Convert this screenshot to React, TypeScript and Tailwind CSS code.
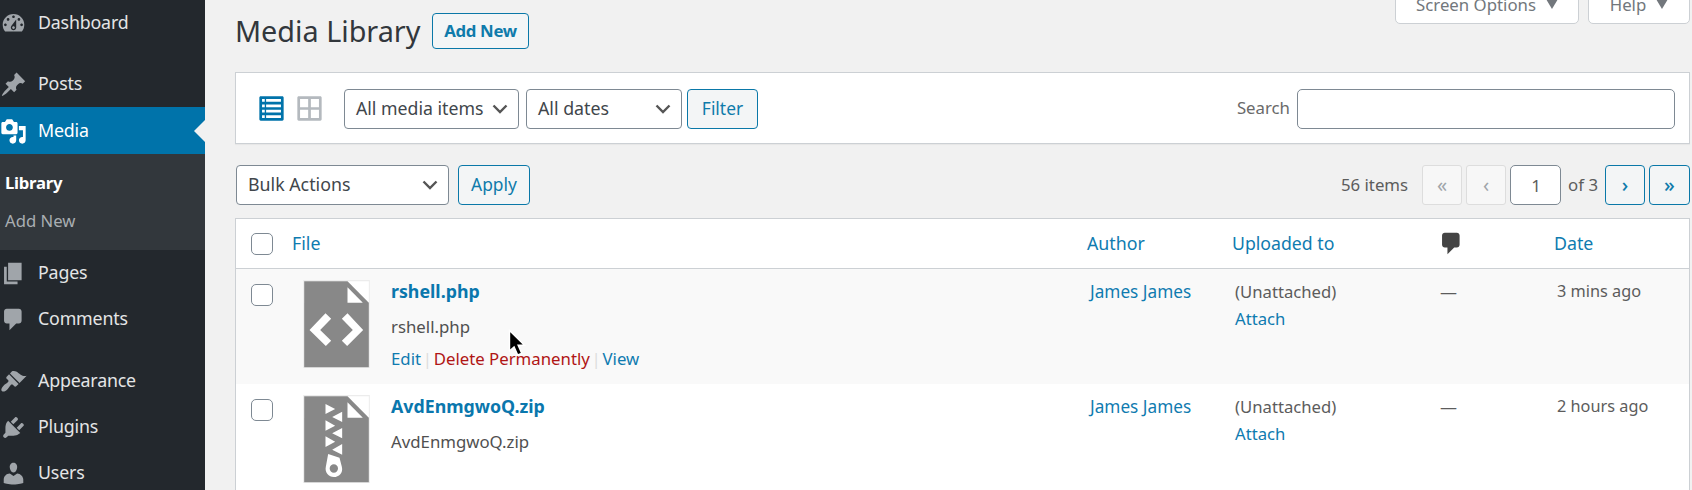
import type { ReactNode } from 'react';

const icons = {
  dashboard:
    'M3.76 16h12.48c1.1-1.37 1.76-3.11 1.76-5 0-4.42-3.58-8-8-8s-8 3.58-8 8c0 1.89.66 3.63 1.76 5zM10 4c.55 0 1 .45 1 1s-.45 1-1 1-1-.45-1-1 .45-1 1-1zM6 6c.55 0 1 .45 1 1s-.45 1-1 1-1-.45-1-1 .45-1 1-1zm8 0c.55 0 1 .45 1 1s-.45 1-1 1-1-.45-1-1 .45-1 1-1zm-5.37 5.55L12 7v6c0 1.1-.9 2-2 2s-2-.9-2-2c0-.57.24-1.08.63-1.45zM4 10c.55 0 1 .45 1 1s-.45 1-1 1-1-.45-1-1 .45-1 1-1zm12 0c.55 0 1 .45 1 1s-.45 1-1 1-1-.45-1-1 .45-1 1-1zm-5 3c0-.55-.45-1-1-1s-1 .45-1 1 .45 1 1 1 1-.45 1-1z',
  post: 'M10.44 3.02l1.82-1.82 6.36 6.35-1.83 1.82c-1.05-.68-2.48-.57-3.41.36l-.75.75c-.92.93-1.04 2.35-.35 3.41l-1.83 1.82-2.41-2.41-2.8 2.79c-.42.42-3.38 2.71-3.8 2.29s1.86-3.39 2.28-3.81l2.79-2.79L4.1 9.36l1.83-1.82c1.05.69 2.48.57 3.4-.36l.75-.75c.93-.92 1.05-2.35.36-3.41z',
  media:
    'M13 11V4c0-.55-.45-1-1-1h-1.67L9 1H5L3.67 3H2c-.55 0-1 .45-1 1v7c0 .55.45 1 1 1h10c.55 0 1-.45 1-1zM7 4.5c1.38 0 2.5 1.12 2.5 2.5S8.38 9.5 7 9.5 4.5 8.38 4.5 7 5.62 4.5 7 4.5zM14 6h5v10.5c0 1.38-1.12 2.5-2.5 2.5S14 17.88 14 16.5s1.12-2.5 2.5-2.5c.17 0 .34.02.5.05V9h-3V6zm-4 8.05V13h2v3.5c0 1.38-1.12 2.5-2.5 2.5S7 17.88 7 16.5 8.12 14 9.5 14c.17 0 .34.02.5.05z',
  page: 'M6 15V2h10v13H6zm-1 1h8v2H3V5h2v11z',
  comments: 'M5 2h9c1.1 0 2 .9 2 2v7c0 1.1-.9 2-2 2h-2l-5 5v-5H5c-1.1 0-2-.9-2-2V4c0-1.1.9-2 2-2z',
  appearance:
    'M14.48 11.06L7.41 3.99l1.5-1.5c.5-.56 2.3-.47 3.51.32 1.21.8 1.43 1.28 2.91 2.1 1.18.64 2.45 1.26 4.45.85zm-.71.71L6.7 4.7 4.93 6.47c-.39.39-.39 1.02 0 1.41l1.06 1.06c.39.39.39 1.03 0 1.42-.6.6-1.43 1.11-2.21 1.69-.35.26-.7.53-1.01.84C1.43 14.23.4 16.08 1.4 17.07c.99 1 2.84-.03 4.18-1.36.31-.31.58-.66.85-1.02.57-.78 1.08-1.61 1.69-2.21.39-.39 1.02-.39 1.41 0l1.06 1.06c.39.39 1.02.39 1.41 0z',
  plugins:
    'M13.11 4.36L9.87 7.6 8 5.73l3.24-3.24c.35-.34 1.05-.2 1.56.32.52.51.66 1.21.31 1.55zm-8 1.77l.91-1.12 9.01 9.01-1.19.84c-.71.71-2.63 1.16-3.82 1.16H6.14L4.9 17.26c-.59.59-1.54.59-2.12 0-.59-.58-.59-1.53 0-2.12l1.24-1.24v-3.88c0-1.13.4-3.19 1.09-3.89zm7.26 3.97l3.24-3.24c.34-.35 1.04-.21 1.55.31.52.51.66 1.21.31 1.55l-3.24 3.25z',
  users:
    'M10 9.25c-2.27 0-2.73-3.44-2.73-3.44C7 4.02 7.82 2 9.97 2c2.16 0 2.98 2.02 2.71 3.81 0 0-.41 3.44-2.68 3.44zm0 2.57L12.72 10c2.39 0 4.52 2.33 4.52 4.53v2.49s-3.65 1.13-7.24 1.13c-3.65 0-7.24-1.13-7.24-1.13v-2.49c0-2.25 1.94-4.48 4.47-4.48z',
  grid: 'M2 1h16c.55 0 1 .45 1 1v16c0 .55-.45 1-1 1H2c-.55 0-1-.45-1-1V2c0-.55.45-1 1-1zm7.01 7.99v-6H3v6h6.01zm8 0v-6h-6v6h6zm-8 8.01v-6H3v6h6.01zm8 0v-6h-6v6h6z',
  list: 'M2 1h16c.55 0 1 .45 1 1v16c0 .55-.45 1-1 1H2c-.55 0-1-.45-1-1V2c0-.55.45-1 1-1zM3 3v2h2V3H3zm3 0v2h11V3H6zM3 7v2h2V7H3zm3 0v2h11V7H6zm-3 4v2h2v-2H3zm3 0v2h11v-2H6zm-3 4v2h2v-2H3zm3 0v2h11v-2H6z',
};

type IconName = keyof typeof icons;

function Icon({ name, className = '' }: { name: IconName; className?: string }) {
  return (
    <svg viewBox="0 0 20 20" fill="currentColor" fillRule="evenodd" className={`size-[27px] shrink-0 ${className}`}>
      <path d={icons[name]} />
    </svg>
  );
}

function NavItem({ icon, label, active }: { icon: IconName; label: string; active?: boolean }) {
  return (
    <a
      className={`relative flex shrink-0 items-center gap-[11px] text-[17.8px] tracking-[-0.01em] ${
        active ? 'h-[47px] bg-[#0073aa] pt-px text-white' : 'h-[46px] text-[#e4e5e6]'
      }`}
    >
      <Icon name={icon} className={active ? 'text-white' : 'text-[#a0a5aa]'} />
      <span>{label}</span>
      {active && (
        <svg viewBox="0 0 11 22" className="absolute right-0 h-[22px] w-[11px]">
          <path d="M11 0v22L0 11z" fill="#f1f1f1" />
        </svg>
      )}
    </a>
  );
}

function Select({ label, className }: { label: string; className: string }) {
  return (
    <button
      className={`flex h-10 items-center justify-between rounded-[4px] border-[1.4px] border-[#7e8993] bg-white pl-[11px] pr-[10px] text-[#41464b] ${className}`}
    >
      {label}
      <svg viewBox="0 0 16 10" className="h-[10px] w-4" fill="none" stroke="#555" strokeWidth="2.4">
        <path d="M1.5 1.5 8 8l6.5-6.5" />
      </svg>
    </button>
  );
}

function Button({ children, className }: { children: ReactNode; className: string }) {
  return (
    <button
      className={`flex items-center justify-center rounded-[4px] border-[1.4px] border-[#0a78a8] bg-[#f3f5f6] text-[#0f7bab] ${className}`}
    >
      {children}
    </button>
  );
}

function Tab({ label, className }: { label: string; className: string }) {
  return (
    <button
      className={`flex h-[42px] items-center justify-center gap-[10px] rounded-b-[5px] border border-[#ccd0d4] bg-white pt-1 text-[16.8px] text-[#72777c] ${className}`}
    >
      {label}
      <svg viewBox="0 0 12 10" className="-mt-0.5 h-[10px] w-3">
        <path d="M0 0h12L6 10z" fill="#72777c" />
      </svg>
    </button>
  );
}

function Checkbox() {
  return <span className="block size-[22px] rounded-[5px] border-[1.3px] border-[#7e8993] bg-white" />;
}

function FileIcon({ kind, fold }: { kind: 'code' | 'zip'; fold: string }) {
  return (
    <svg viewBox="27 30 200 264" className="h-[88px] w-[67px]">
      <path d="M27 30h200v264H27z" fill="#ececec" />
      <path d="M30 34h194v258H30z" fill={fold} />
      <path d="M30 34h130l64 64v194H30z" fill="#888" />
      <path d="M160 52v46h46z" fill={fold} />
      {kind === 'code' ? (
        <path
          fill={fold}
          d="M46 180l48-50 17 16-33 34 33 32-16 16zM207 180l-47-50-17 16 33 34-33 32 16 16z"
        />
      ) : (
        <path
          fill={fold}
          fillRule="evenodd"
          d="M94 57v30l29-15zM144 80v31l-30-15zM94 106v31l29-15zM144 129v31l-30-15zM94 154v32l29-16zM144 177v32l-30-15zM102 207l34 11 7 27c5 18-9 31-24 31s-28-14-24-31zM119 238a12 12 0 1 0 0 25 12 12 0 0 0 0-25z"
        />
      )}
    </svg>
  );
}

const cols = 'grid grid-cols-[57px_794px_145px_207px_115px_1fr]';
const link = 'text-[#0f7bb0]';

function Row({
  file,
  date,
  kind,
  fold,
  className,
  children,
}: {
  file: string;
  date: string;
  kind: 'code' | 'zip';
  fold: string;
  className: string;
  children?: ReactNode;
}) {
  return (
    <div className={`${cols} shrink-0 text-[17px] leading-[27px] text-[#5c5c5c] ${className}`}>
      <div className="pl-[15px] pt-[15px]">
        <Checkbox />
      </div>
      <div className="flex gap-[21px] pl-[10px] pt-[11px]">
        <FileIcon kind={kind} fold={fold} />
        <div className="-mt-0.5">
          <div className="text-[17.8px] font-bold text-[#0a77ad]">{file}</div>
          <div className="mt-2 text-[16.8px] text-[#505050]">{file}</div>
          {children}
        </div>
      </div>
      <div className={`pl-[3px] pt-[9px] text-[17.2px] ${link}`}>James James</div>
      <div className="pl-[3px] pt-[9px] text-[16.7px]">
        <div>(Unattached)</div>
        <div className={link}>Attach</div>
      </div>
      <div className="pl-px pt-[9px]">—</div>
      <div className="pl-[3px] pt-[9px] text-[16.3px]">{date}</div>
    </div>
  );
}

export default function App() {
  return (
    <div className="flex h-[490px] w-[1692px] overflow-hidden whitespace-nowrap bg-[#f1f1f1] font-['Noto_Sans',sans-serif] text-[17.8px] leading-none">
      <nav className="flex w-[205px] shrink-0 flex-col bg-[#23282d]">
        <NavItem icon="dashboard" label="Dashboard" />
        <div className="h-[15px] shrink-0" />
        <NavItem icon="post" label="Posts" />
        <NavItem icon="media" label="Media" active />
        <div className="flex h-[96px] shrink-0 flex-col bg-[#32373c] pl-[5px] pt-[10px] text-[16.7px] leading-[37.5px]">
          <a className="font-bold tracking-[-0.015em] text-white">Library</a>
          <a className="text-[#a9aeb2]">Add New</a>
        </div>
        <NavItem icon="page" label="Pages" />
        <NavItem icon="comments" label="Comments" />
        <div className="h-4 shrink-0" />
        <NavItem icon="appearance" label="Appearance" />
        <NavItem icon="plugins" label="Plugins" />
        <NavItem icon="users" label="Users" />
      </nav>

      <main className="flex w-[1485px] flex-col pl-[30px]">
        <header className="flex h-[72px] shrink-0">
          <h1 className="mt-[9px] w-[197px] text-[28.8px] leading-[43px] text-[#32373c]">Media Library</h1>
          <Button className="mt-[13px] h-9 w-[97px] rounded-[3px] pt-px text-[16.8px] font-bold tracking-[-0.02em]">
            Add New
          </Button>
          <div className="-mt-[18px] ml-auto flex gap-[9px]">
            <Tab label="Screen Options" className="w-[184px]" />
            <Tab label="Help" className="w-[102px]" />
          </div>
        </header>

        <section className="flex h-[72px] shrink-0 items-center border border-[#ccd0d4] bg-white pl-[22px] pr-[14px] pt-px shadow-[0_1px_1px_rgba(0,0,0,0.04)]">
          <Icon name="list" className="text-[#0073aa]" />
          <Icon name="grid" className="ml-[11px] text-[#b4b9be]" />
          <Select label="All media items" className="ml-[21px] w-[175px] text-[17.7px]" />
          <Select label="All dates" className="ml-[7px] w-[156px]" />
          <Button className="ml-[5px] h-10 w-[71px] text-[17.4px]">Filter</Button>
          <label className="ml-auto mr-[7px] text-[16.8px] text-[#6a6a6a]">Search</label>
          <input className="h-10 w-[378px] rounded-[5px] border-[1.4px] border-[#7e8993] bg-white" />
        </section>

        <section className="flex h-[74px] shrink-0 items-center pl-px pt-[8px] text-[#5c5c5c]">
          <Select label="Bulk Actions" className="w-[213px]" />
          <Button className="ml-[9px] h-10 w-[72px] text-[17.4px]">Apply</Button>
          <span className="ml-auto text-[16.8px]">56 items</span>
          <span className="ml-[14px] flex h-10 w-10 items-center justify-center rounded-[3px] border border-[#ddd] bg-[#f7f7f7] text-[20px] text-[#a0a5aa]">
            «
          </span>
          <span className="ml-1 flex h-10 w-10 items-center justify-center rounded-[3px] border border-[#ddd] bg-[#f7f7f7] text-[20px] text-[#a0a5aa]">
            ‹
          </span>
          <span className="ml-[4px] flex h-10 w-[51px] items-center justify-center rounded-[5px] border-[1.4px] border-[#7e8993] bg-white pl-px text-[17px]">
            1
          </span>
          <span className="mx-[7px] text-[16.8px]">of 3</span>
          <Button className="h-10 w-10 text-[20px] font-medium">›</Button>
          <Button className="ml-1 h-10 w-[41px] text-[20px] font-medium">»</Button>
        </section>

        <section className="flex h-[300px] shrink-0 flex-col border border-[#ccd0d4] bg-white">
          <div className={`${cols} h-[50px] shrink-0 items-center border-b border-[#ccd0d4] text-[17.8px] ${link}`}>
            <div className="pl-[15px]">
              <Checkbox />
            </div>
            <div className="-ml-px">File</div>
            <div>Author</div>
            <div className="text-[17.7px]">Uploaded to</div>
            <div className="text-[#444]">
              <Icon name="comments" className="-ml-px" />
            </div>
            <div>Date</div>
          </div>
          <Row file="rshell.php" date="3 mins ago" kind="code" fold="#fff" className="h-[115px] bg-[#f9f9f9]">
            <div className="relative mt-[5px] flex gap-[1.7px] text-[16.8px]">
              <a className={link}>Edit</a>
              <span className="text-[#ddd]">|</span>
              <a className="text-[#b01515]">Delete Permanently</a>
              <span className="text-[#ddd]">|</span>
              <a className={link}>View</a>
              <svg viewBox="0 0 18 28" className="absolute -top-[16px] left-[117px] h-[28px] w-[18px]">
                <path
                  d="M1.5 1.5v20.5l4.6-4.2 3.6 8.2 4-1.7-3.6-8h6.4z"
                  fill="#000"
                  stroke="#fff"
                  strokeWidth="1.4"
                />
              </svg>
            </div>
          </Row>
          <Row file="AvdEnmgwoQ.zip" date="2 hours ago" kind="zip" fold="#fff" className="h-[115px] bg-white" />
        </section>
      </main>
    </div>
  );
}
